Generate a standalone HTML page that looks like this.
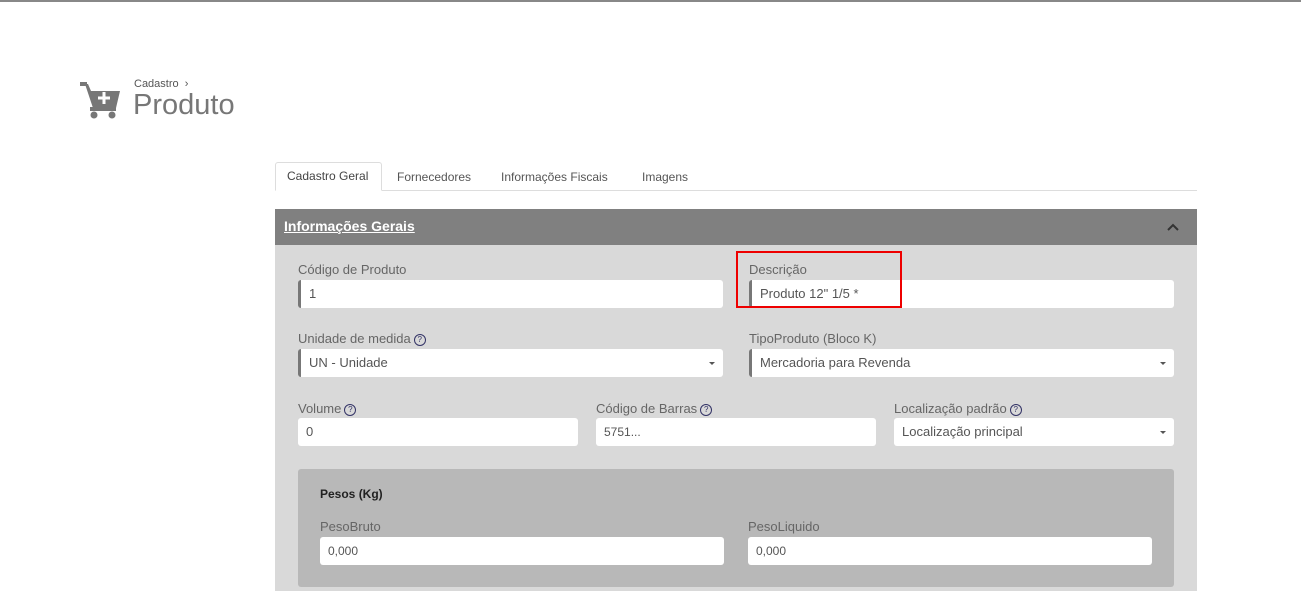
<html><head><style>
body{margin:0;width:1301px;height:591px;background:#fff;font-family:"Liberation Sans",sans-serif;position:relative;overflow:hidden;color:#555}
.a{position:absolute}
.lbl{position:absolute;font-size:13px;color:#666}
.inp{position:absolute;height:28px;background:#fff;border-radius:3px;box-sizing:border-box;font-size:13px;color:#555;line-height:28px;padding-left:8px}
.bl{border-left:3px solid #777}
.q{display:inline-block;width:10px;height:10px;border:1px solid #336;border-radius:50%;font-size:8px;line-height:10px;text-align:center;color:#336;vertical-align:1px;margin-left:3px}
.car{position:absolute;right:8px;top:13px;border-left:3px solid transparent;border-right:3px solid transparent;border-top:3px solid #555}
</style></head><body>
<div class="a" style="left:0;top:0;width:1301px;height:2px;background:#888"></div>
<svg class="a" style="left:80px;top:82px" width="42" height="38" viewBox="0 0 42 38"><path d="M0 2h6l6 24h24l3-18H9" fill="none" stroke="#777" stroke-width="0"/><rect x="0" y="0" width="7" height="4" fill="#777"/><path d="M5 2h3l3 7h29l-4 17H13z" fill="#777"/><rect x="10" y="25" width="26" height="4" fill="#777"/><circle cx="14" cy="33" r="3.5" fill="#777"/><circle cx="32" cy="33" r="3.5" fill="#777"/><path d="M24 10v12M18 16h12" stroke="#fff" stroke-width="3"/></svg>
<div class="a" style="left:134px;top:78px;font-size:11px;color:#555">Cadastro &nbsp;›</div>
<div class="a" style="left:133px;top:89px;font-size:29px;color:#777">Produto</div>
<div class="a" style="left:275px;top:190px;width:922px;height:1px;background:#ddd"></div>
<div class="a" style="left:275px;top:162px;width:107px;height:29px;border:1px solid #ddd;border-bottom:1px solid #fff;border-radius:3px 3px 0 0;background:#fff;box-sizing:border-box"></div>
<div class="a" style="left:287px;top:169px;font-size:12px;color:#444">Cadastro Geral</div>
<div class="a" style="left:397px;top:170px;font-size:12px;color:#555">Fornecedores</div>
<div class="a" style="left:501px;top:170px;font-size:12px;color:#555">Informações Fiscais</div>
<div class="a" style="left:642px;top:170px;font-size:12px;color:#555">Imagens</div>
<div class="a" style="left:275px;top:209px;width:922px;height:36px;background:#808080"></div>
<div class="a" style="left:284px;top:218px;font-size:14px;font-weight:bold;color:#fff;text-decoration:underline">Informações Gerais</div>
<svg class="a" style="left:1166px;top:222px" width="14" height="10"><path d="M2 8l5-5 5 5" fill="none" stroke="#333" stroke-width="2"/></svg>
<div class="a" style="left:275px;top:245px;width:922px;height:346px;background:#d9d9d9"></div>
<div class="lbl" style="left:298px;top:262px">Código de Produto</div>
<div class="inp bl" style="left:298px;top:280px;width:425px">1</div>
<div class="lbl" style="left:749px;top:262px">Descrição</div>
<div class="inp bl" style="left:749px;top:280px;width:425px">Produto 12" 1/5 *</div>
<div class="a" style="left:736px;top:251px;width:166px;height:57px;border:2px solid #e00;box-sizing:border-box"></div>
<div class="lbl" style="left:298px;top:331px">Unidade de medida<span class="q">?</span></div>
<div class="inp bl" style="left:298px;top:349px;width:425px">UN - Unidade<span class="car"></span></div>
<div class="lbl" style="left:749px;top:331px">TipoProduto (Bloco K)</div>
<div class="inp bl" style="left:749px;top:349px;width:425px">Mercadoria para Revenda<span class="car"></span></div>
<div class="lbl" style="left:298px;top:401px">Volume<span class="q">?</span></div>
<div class="inp" style="left:298px;top:418px;width:280px">0</div>
<div class="lbl" style="left:596px;top:401px">Código de Barras<span class="q">?</span></div>
<div class="inp" style="left:596px;top:418px;width:280px;font-size:12px">5751...</div>
<div class="lbl" style="left:894px;top:401px">Localização padrão<span class="q">?</span></div>
<div class="inp" style="left:894px;top:418px;width:280px">Localização principal<span class="car"></span></div>
<div class="a" style="left:298px;top:469px;width:876px;height:118px;background:#b8b8b8;border-radius:3px"></div>
<div class="a" style="left:320px;top:487px;font-size:12px;font-weight:bold;color:#222">Pesos (Kg)</div>
<div class="lbl" style="left:320px;top:519px">PesoBruto</div>
<div class="inp" style="left:320px;top:537px;width:404px;font-size:12px">0,000</div>
<div class="lbl" style="left:748px;top:519px">PesoLiquido</div>
<div class="inp" style="left:748px;top:537px;width:404px;font-size:12px">0,000</div>
</body></html>
